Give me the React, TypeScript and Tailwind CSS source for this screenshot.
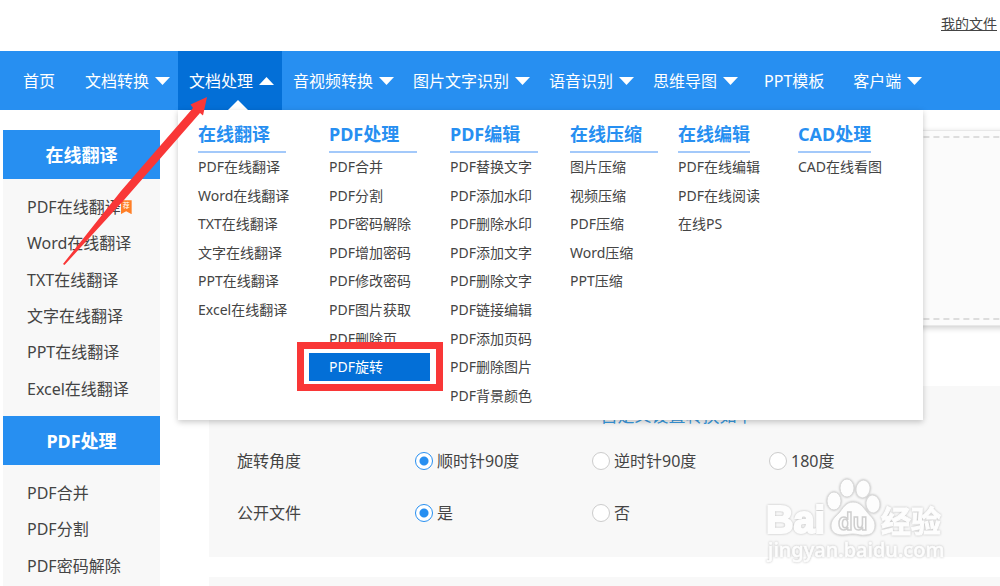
import React from "react";

type NavItem = { label: string; menu?: boolean; active?: boolean };

const navItems: NavItem[] = [
  { label: "首页" },
  { label: "文档转换", menu: true },
  { label: "文档处理", menu: true, active: true },
  { label: "音视频转换", menu: true },
  { label: "图片文字识别", menu: true },
  { label: "语音识别", menu: true },
  { label: "思维导图", menu: true },
  { label: "PPT模板" },
  { label: "客户端", menu: true },
];

const menuColumns = [
  { title: "在线翻译", wide: true, items: ["PDF在线翻译", "Word在线翻译", "TXT在线翻译", "文字在线翻译", "PPT在线翻译", "Excel在线翻译"] },
  { title: "PDF处理", wide: true, items: ["PDF合并", "PDF分割", "PDF密码解除", "PDF增加密码", "PDF修改密码", "PDF图片获取", "PDF删除页", "PDF旋转"] },
  { title: "PDF编辑", wide: true, items: ["PDF替换文字", "PDF添加水印", "PDF删除水印", "PDF添加文字", "PDF删除文字", "PDF链接编辑", "PDF添加页码", "PDF删除图片", "PDF背景颜色"] },
  { title: "在线压缩", wide: true, items: ["图片压缩", "视频压缩", "PDF压缩", "Word压缩", "PPT压缩"] },
  { title: "在线编辑", wide: false, items: ["PDF在线编辑", "PDF在线阅读", "在线PS"] },
  { title: "CAD处理", wide: false, items: ["CAD在线看图"] },
];

function Caret({ up }: { up?: boolean }) {
  return (
    <svg width="15" height="8" viewBox="0 0 15 8" className="shrink-0" aria-hidden="true">
      <path d={up ? "M0 8 7.5 0 15 8Z" : "M0 0 7.5 8 15 0Z"} fill="white" />
    </svg>
  );
}

function MegaMenu() {
  return (
    <div className="absolute left-0 top-full z-20 w-[745px] bg-white pb-[10px] pt-3 text-sm text-[#444] shadow-[0_2px_6px_rgba(0,0,0,0.22)]">
      <div className="grid grid-cols-[131px_121px_120px_108px_120px_1fr]">
        {menuColumns.map((col) => (
          <section key={col.title}>
            <h3
              className={
                "ml-5 h-[31px] border-b-2 border-[#a3c9fa] text-lg/6 font-bold text-[#278ff1] " +
                (col.wide ? "w-[88px]" : "w-max")
              }
            >
              {col.title}
            </h3>
            <ul className="grid h-[257px] grid-rows-9">
              {col.items.map((item) => (
                <li key={item}>
                  <a
                    href="#"
                    className={
                      "flex h-full items-center whitespace-nowrap pl-5 " +
                      (item === "PDF旋转" ? "bg-[#036fd7] text-white" : "")
                    }
                  >
                    {item}
                  </a>
                </li>
              ))}
            </ul>
          </section>
        ))}
      </div>
      <div className="pointer-events-none absolute left-[119px] top-[232px] h-[49px] w-[146px] border-[7px] border-[#f93737]" />
    </div>
  );
}

function SideGroup({ title, items, listClass }: { title: string; items: string[]; listClass: string }) {
  return (
    <section>
      <h2 className="flex h-[49px] items-center justify-center bg-[#278ff1] text-lg font-bold text-white">{title}</h2>
      <ul className={"grid pl-6 pt-[10px] text-base text-[#444] " + listClass}>
        {items.map((item, i) => (
          <li key={item} className="flex items-center whitespace-nowrap">
            <a href="#">{item}</a>
            {title === "在线翻译" && i === 0 && (
              <span className="h-[14px] w-[11px] bg-[#ff7f27] text-center text-[7px]/[12px] text-white [clip-path:polygon(0_0,100%_0,100%_100%,50%_80%,0_100%)]">
                荐
              </span>
            )}
          </li>
        ))}
      </ul>
    </section>
  );
}

function RadioRow({ legend, name, options }: { legend: string; name: string; options: string[] }) {
  return (
    <fieldset className="flex h-[52px] items-center pl-7">
      <legend className="float-left w-[178px]">{legend}</legend>
      {options.map((option, i) => (
        <label key={option} className="flex w-[177px] items-center gap-1">
          <input
            type="radio"
            name={name}
            defaultChecked={i === 0}
            className="size-[18px] appearance-none rounded-full border border-[#ccc] bg-white checked:border-[#278ff1] checked:bg-[radial-gradient(circle,#278ff1_4px,white_5px)]"
          />
          {option}
        </label>
      ))}
    </fieldset>
  );
}

function Watermark() {
  return (
    <svg
      className="pointer-events-none absolute left-[760px] top-[470px] z-10 [filter:drop-shadow(0_0_1px_#bbb)]"
      width="190"
      height="100"
      viewBox="0 0 190 100"
      fill="#fdfdfd"
      stroke="#fdfdfd"
      aria-hidden="true"
    >
      <g fontFamily="Liberation Sans, Noto Sans CJK SC, sans-serif" fontWeight="700" strokeWidth="2">
        <text x="6" y="63" fontSize="38">Bai</text>
        <text x="121" y="62" fontSize="30" strokeWidth="1">经验</text>
      </g>
      <g stroke="#dadada" strokeWidth="1">
        <ellipse cx="74" cy="31" rx="7" ry="9" />
        <ellipse cx="87" cy="18" rx="7" ry="9" />
        <ellipse cx="103" cy="19" rx="7" ry="9" transform="rotate(10 103 19)" />
        <ellipse cx="113" cy="34" rx="7" ry="9" transform="rotate(-8 113 34)" />
        <path d="M93 32C86 32 83 38 79 43C75 47 71 50 71 56C71 62 76 65 82 65C87 65 89 64 93 64C98 64 101 66 106 65C112 65 115 61 115 55C115 49 110 46 107 42C103 37 100 32 93 32Z" />
      </g>
      <text x="78" y="60" fontSize="24" fontFamily="Liberation Sans, sans-serif" fontWeight="700" stroke="#cfcfcf" strokeWidth="1.5">
        du
      </text>
      <text x="8" y="87" fontSize="20" fontFamily="Noto Sans, sans-serif" fontWeight="500" strokeWidth="0.6">
        jingyan.baidu.com
      </text>
    </svg>
  );
}

export default function App() {
  return (
    <div className="relative overflow-hidden bg-white font-['Noto_Sans','Noto_Sans_CJK_SC',sans-serif]">
      <header>
        <div className="flex h-[51px] items-center justify-end pr-[3px] text-sm text-[#444]">
          <a href="#" className="-mt-1 underline">我的文件</a>
        </div>
        <nav className="bg-[#278ff1] pl-1 text-base text-white">
          <ul className="flex h-[59px]">
            {navItems.map((item) => (
              <li key={item.label} className={"relative shrink-0 " + (item.active ? "bg-[#036fd7]" : "")}>
                <a
                  href="#"
                  className={
                    "flex h-full items-center whitespace-nowrap " +
                    (item.menu ? "gap-1.5 pl-[11px] pr-2" : "min-w-[70px] justify-center px-[18px]")
                  }
                >
                  {item.label}
                  {item.menu && <Caret up={item.active} />}
                </a>
                {item.active && (
                  <>
                    <svg className="absolute bottom-0 left-[50px]" width="20" height="10" viewBox="0 0 20 10" aria-hidden="true">
                      <path d="M0 10 10 0 20 10Z" fill="white" />
                    </svg>
                    <MegaMenu />
                  </>
                )}
              </li>
            ))}
          </ul>
        </nav>
      </header>

      <div className="flex gap-[49px] pl-[3px] pt-5">
        <aside className="w-[157px] shrink-0 bg-[#f8f8f8]">
          <SideGroup
            title="在线翻译"
            items={["PDF在线翻译", "Word在线翻译", "TXT在线翻译", "文字在线翻译", "PPT在线翻译", "Excel在线翻译"]}
            listClass="h-[237px] grid-rows-6 pb-[9px]"
          />
          <SideGroup title="PDF处理" items={["PDF合并", "PDF分割", "PDF密码解除"]} listClass="h-[121px] grid-rows-3 pb-[2px]" />
        </aside>

        <main className="flex min-w-[936px] flex-1 flex-col text-base text-[#444]">
          <div className="mb-[60px] h-[196px] border border-[#e8e8e8] bg-[#fbfbfb] p-[5px] shadow-[0_2px_6px_rgba(0,0,0,0.2)]">
            <div className="h-full border-2 border-dashed border-[#ddd]" />
          </div>
          <section className="mb-5 h-[171px] bg-[#f8f8f8] pt-5">
            <h2 className="h-[29px] text-center text-[17px]/5 text-[#3a9be0]">自定义设置转换如下</h2>
            <RadioRow legend="旋转角度" name="angle" options={["顺时针90度", "逆时针90度", "180度"]} />
            <RadioRow legend="公开文件" name="public" options={["是", "否"]} />
          </section>
          <div className="flex-1 bg-[#f8f8f8]" />
        </main>
      </div>

      <svg className="pointer-events-none absolute left-0 top-0 z-30" width="220" height="280" viewBox="0 0 220 280" aria-hidden="true">
        <path d="M63 264 121 191 193 108 190.5 104.5 207 97 203 115.5 200 113 124 200 64.5 265Z" fill="#f93737" />
      </svg>
      <Watermark />
    </div>
  );
}
